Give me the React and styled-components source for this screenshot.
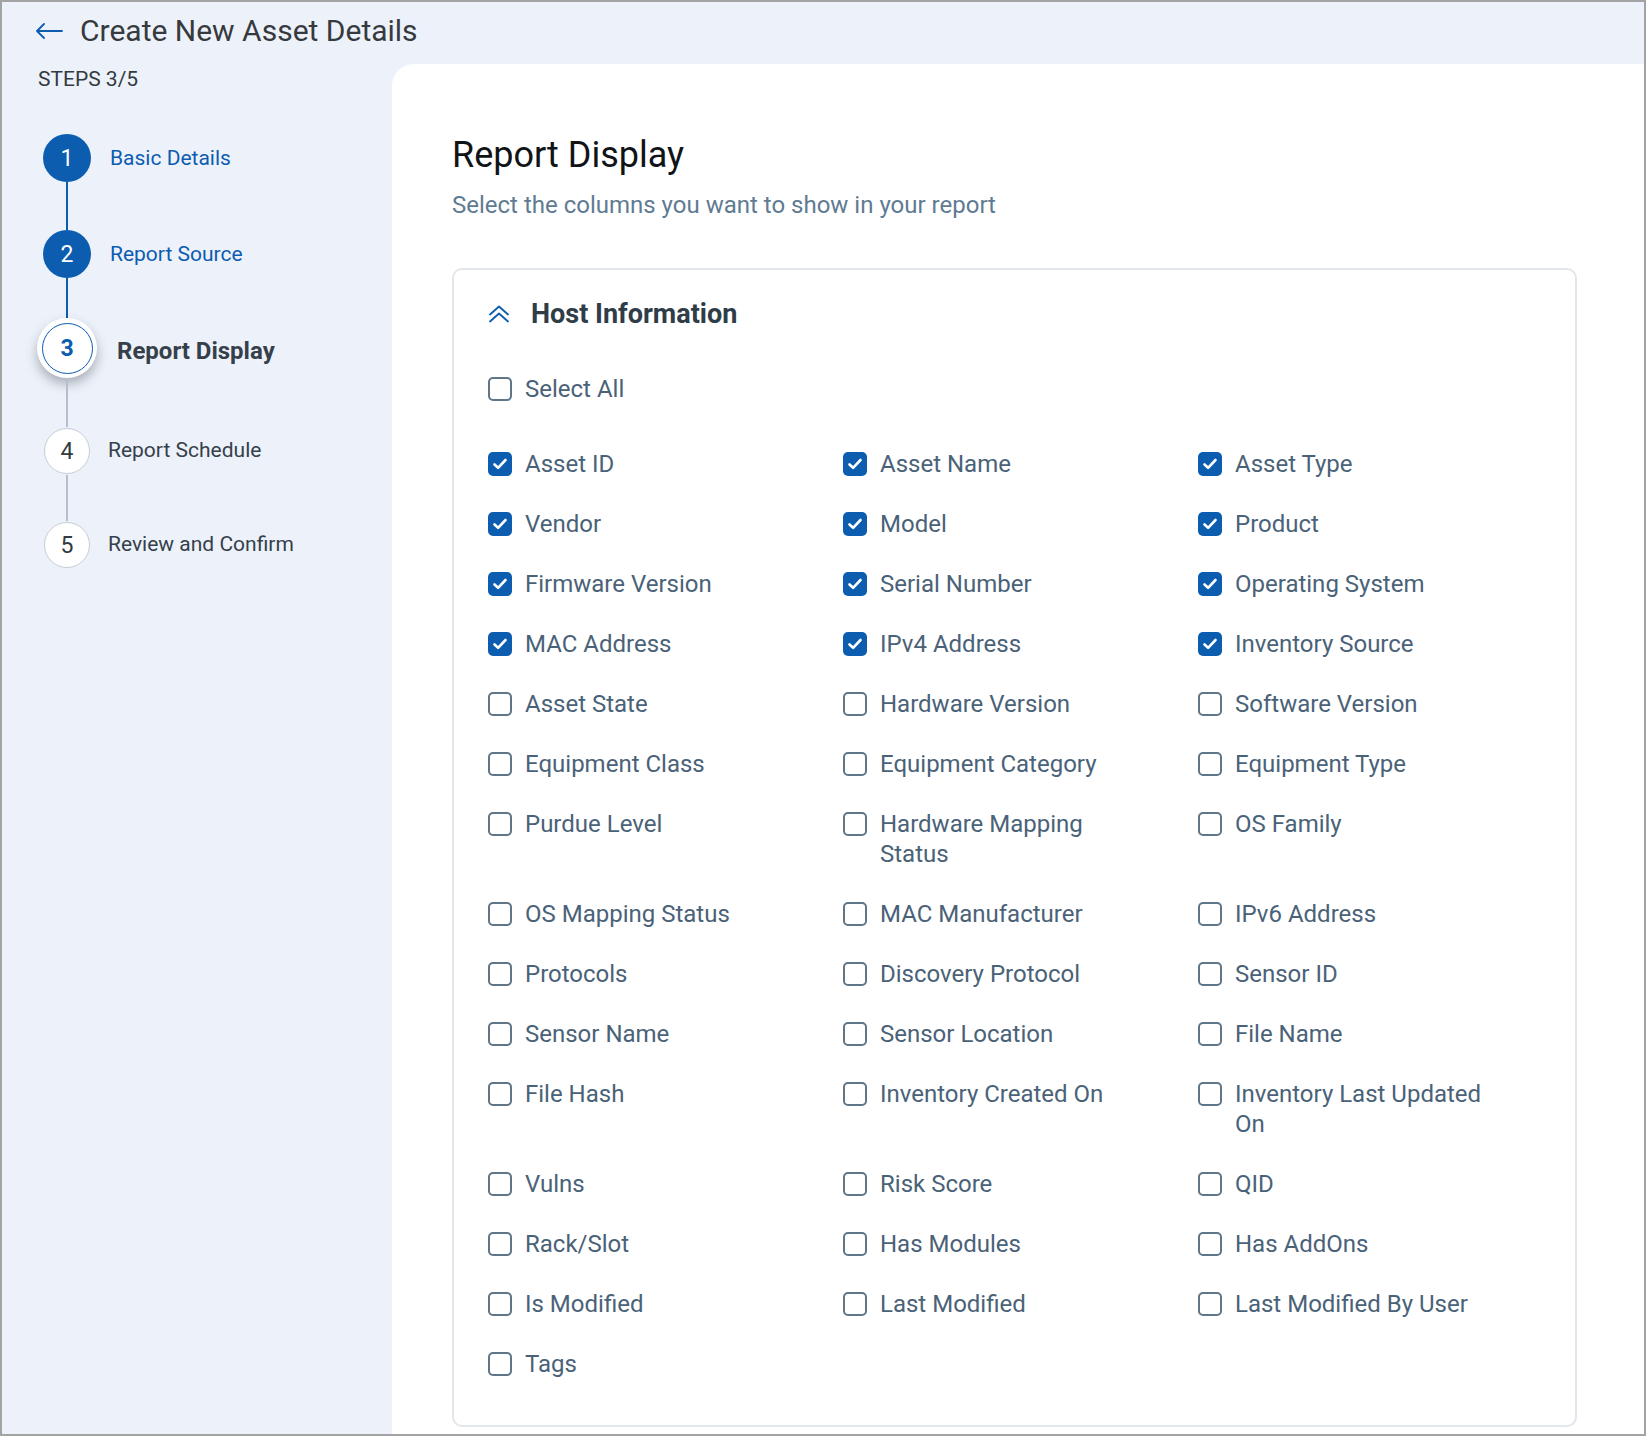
import React from 'react';
import styled, { createGlobalStyle } from 'styled-components';

const GlobalStyle = createGlobalStyle`
  * { box-sizing: border-box; }
  body {
    margin: 0;
    font-family: Roboto, "Liberation Sans", Arial, sans-serif;
    background: #ffffff;
  }
`;

const BLUE = '#0c5cb0';

const Page = styled.div`
  width: 1646px;
  height: 1436px;
  border: 2px solid #a3a3a3;
  background: #edf2fa;
  display: flex;
  flex-direction: column;
  overflow: hidden;
`;

const Header = styled.header`
  height: 62px;
  display: flex;
  align-items: flex-start;
  padding: 11px 0 0 33px;
  gap: 17px;
`;

const BackButton = styled.button`
  border: none;
  background: none;
  padding: 0;
  margin-top: 10px;
  display: flex;
  cursor: pointer;
`;

const PageTitle = styled.h1`
  margin: 0;
  font-size: 30px;
  line-height: 36px;
  font-weight: 400;
  color: #363a3e;
`;

const Body = styled.div`
  flex: 1;
  display: flex;
  min-height: 0;
`;

const Sidebar = styled.aside`
  width: 390px;
  flex-shrink: 0;
  padding: 3px 0 0 36px;
`;

const StepsCount = styled.div`
  font-size: 21px;
  line-height: 24px;
  color: #333a40;
  margin-bottom: 43px;
`;

const StepList = styled.ol`
  list-style: none;
  margin: 0;
  padding: 0;
`;

const StepRow = styled.li`
  display: flex;
  align-items: flex-start;
`;

const Marker = styled.div`
  width: 58px;
  display: flex;
  flex-direction: column;
  align-items: center;
`;

const sizes = { done: 48, active: 60, todo: 46 };

const Circle = styled.div`
  width: ${(p) => sizes[p.$state]}px;
  height: ${(p) => sizes[p.$state]}px;
  margin: ${(p) => (p.$state === 'todo' ? '1px 0' : '0')};
  border-radius: 50%;
  display: flex;
  align-items: center;
  justify-content: center;
  font-size: 23px;
  background: ${(p) => (p.$state === 'done' ? BLUE : '#ffffff')};
  color: ${(p) => (p.$state === 'done' ? '#ffffff' : '#333a40')};
  border: ${(p) => (p.$state === 'todo' ? '1px solid #c4cdd6' : 'none')};
  box-shadow: ${(p) => (p.$state === 'active' ? '0 6px 12px rgba(40, 50, 60, 0.35)' : 'none')};
`;

const ActiveInner = styled.div`
  width: 51px;
  height: 51px;
  border-radius: 50%;
  border: 1.5px solid ${BLUE};
  color: ${BLUE};
  font-weight: 700;
  font-size: 23px;
  display: flex;
  align-items: center;
  justify-content: center;
`;

const Connector = styled.div`
  width: 2px;
  height: ${(p) => p.$length}px;
  background: ${(p) => (p.$done ? BLUE : '#b5bfc9')};
`;

const labelPad = { done: 14, active: 21, todo: 12 };

const StepLabel = styled.div`
  height: ${(p) => sizes[p.$state]}px;
  display: flex;
  align-items: center;
  padding-left: ${(p) => labelPad[p.$state]}px;
  padding-top: ${(p) => (p.$state === 'active' ? 6 : 0)}px;
  font-size: ${(p) => (p.$state === 'active' ? 24 : 21)}px;
  font-weight: ${(p) => (p.$state === 'active' ? 700 : 400)};
  color: ${(p) => (p.$state === 'done' ? BLUE : '#35404a')};
`;

const Panel = styled.main`
  flex: 1;
  background: #ffffff;
  border-top-left-radius: 22px;
  padding: 70px 67px 0 60px;
  overflow: hidden;
`;

const Heading = styled.h2`
  margin: 0;
  font-size: 36px;
  line-height: 43px;
  font-weight: 400;
  color: #111417;
`;

const Subtitle = styled.p`
  margin: 12px 0 0;
  font-size: 24px;
  line-height: 32px;
  color: #5f7b92;
`;

const Card = styled.section`
  margin-top: 47px;
  border: 2px solid #e1e7ec;
  border-radius: 10px;
  padding: 27px 22px 46px 34px;
`;

const CardHeader = styled.div`
  display: flex;
  align-items: center;
  gap: 21px;
  height: 34px;
`;

const CardTitle = styled.h3`
  margin: 0;
  font-size: 27px;
  font-weight: 700;
  color: #2f3d48;
`;

const Option = styled.label`
  display: flex;
  align-items: flex-start;
  gap: 13px;
  font-size: 24px;
  line-height: 30px;
  color: #4a6278;
  cursor: pointer;
`;

const SelectAllRow = styled.div`
  margin-top: 43px;
  margin-bottom: 45px;
`;

const Box = styled.span`
  width: 24px;
  height: 24px;
  flex-shrink: 0;
  margin-top: 3px;
  border-radius: 5px;
  border: ${(p) => (p.$checked ? 'none' : '2px solid #5f7588')};
  background: ${(p) => (p.$checked ? BLUE : '#ffffff')};
  display: flex;
  align-items: center;
  justify-content: center;
`;

const OptionText = styled.span`
  max-width: 262px;
`;

const Grid = styled.div`
  display: grid;
  grid-template-columns: repeat(3, 1fr);
  row-gap: 30px;
`;

const steps = [
  { n: 1, label: 'Basic Details', state: 'done', line: 48 },
  { n: 2, label: 'Report Source', state: 'done', line: 40 },
  { n: 3, label: 'Report Display', state: 'active', line: 49 },
  { n: 4, label: 'Report Schedule', state: 'todo', line: 46 },
  { n: 5, label: 'Review and Confirm', state: 'todo' },
];

const columns = [
  ['Asset ID', true], ['Asset Name', true], ['Asset Type', true],
  ['Vendor', true], ['Model', true], ['Product', true],
  ['Firmware Version', true], ['Serial Number', true], ['Operating System', true],
  ['MAC Address', true], ['IPv4 Address', true], ['Inventory Source', true],
  ['Asset State', false], ['Hardware Version', false], ['Software Version', false],
  ['Equipment Class', false], ['Equipment Category', false], ['Equipment Type', false],
  ['Purdue Level', false], ['Hardware Mapping Status', false], ['OS Family', false],
  ['OS Mapping Status', false], ['MAC Manufacturer', false], ['IPv6 Address', false],
  ['Protocols', false], ['Discovery Protocol', false], ['Sensor ID', false],
  ['Sensor Name', false], ['Sensor Location', false], ['File Name', false],
  ['File Hash', false], ['Inventory Created On', false], ['Inventory Last Updated On', false],
  ['Vulns', false], ['Risk Score', false], ['QID', false],
  ['Rack/Slot', false], ['Has Modules', false], ['Has AddOns', false],
  ['Is Modified', false], ['Last Modified', false], ['Last Modified By User', false],
  ['Tags', false],
];

const Checkbox = ({ checked }) => (
  <Box $checked={checked}>
    {checked && (
      <svg width="18" height="18" viewBox="0 0 18 18" fill="none">
        <path d="M3.5 9.5l3.6 3.3L14.5 5" stroke="#fff" strokeWidth="2.6" strokeLinecap="round" strokeLinejoin="round" />
      </svg>
    )}
  </Box>
);

const App = () => {
  return (
    <>
      <GlobalStyle />
      <Page>
        <Header>
          <BackButton aria-label="Back">
            <svg width="28" height="16" viewBox="0 0 28 16" fill="none">
              <path d="M27 8H2M9 1L2 8l7 7" stroke={BLUE} strokeWidth="1.8" strokeLinecap="round" strokeLinejoin="round" />
            </svg>
          </BackButton>
          <PageTitle>Create New Asset Details</PageTitle>
        </Header>
        <Body>
          <Sidebar>
            <StepsCount>STEPS 3/5</StepsCount>
            <StepList>
              {steps.map((s) => (
                <StepRow key={s.n}>
                  <Marker>
                    <Circle $state={s.state}>
                      {s.state === 'active' ? <ActiveInner>{s.n}</ActiveInner> : s.n}
                    </Circle>
                    {s.line && <Connector $length={s.line} $done={s.state === 'done'} />}
                  </Marker>
                  <StepLabel $state={s.state}>{s.label}</StepLabel>
                </StepRow>
              ))}
            </StepList>
          </Sidebar>
          <Panel>
            <Heading>Report Display</Heading>
            <Subtitle>Select the columns you want to show in your report</Subtitle>
            <Card>
              <CardHeader>
                <svg width="22" height="20" viewBox="0 0 22 20" fill="none">
                  <path d="M2 10.5L11 2.5l9 8M2 17.5l9-8 9 8" stroke={BLUE} strokeWidth="1.8" strokeLinecap="round" strokeLinejoin="round" />
                </svg>
                <CardTitle>Host Information</CardTitle>
              </CardHeader>
              <SelectAllRow>
                <Option>
                  <Checkbox checked={false} />
                  <OptionText>Select All</OptionText>
                </Option>
              </SelectAllRow>
              <Grid>
                {columns.map(([name, checked]) => (
                  <Option key={name}>
                    <Checkbox checked={checked} />
                    <OptionText>{name}</OptionText>
                  </Option>
                ))}
              </Grid>
            </Card>
          </Panel>
        </Body>
      </Page>
    </>
  );
};

export default App;
